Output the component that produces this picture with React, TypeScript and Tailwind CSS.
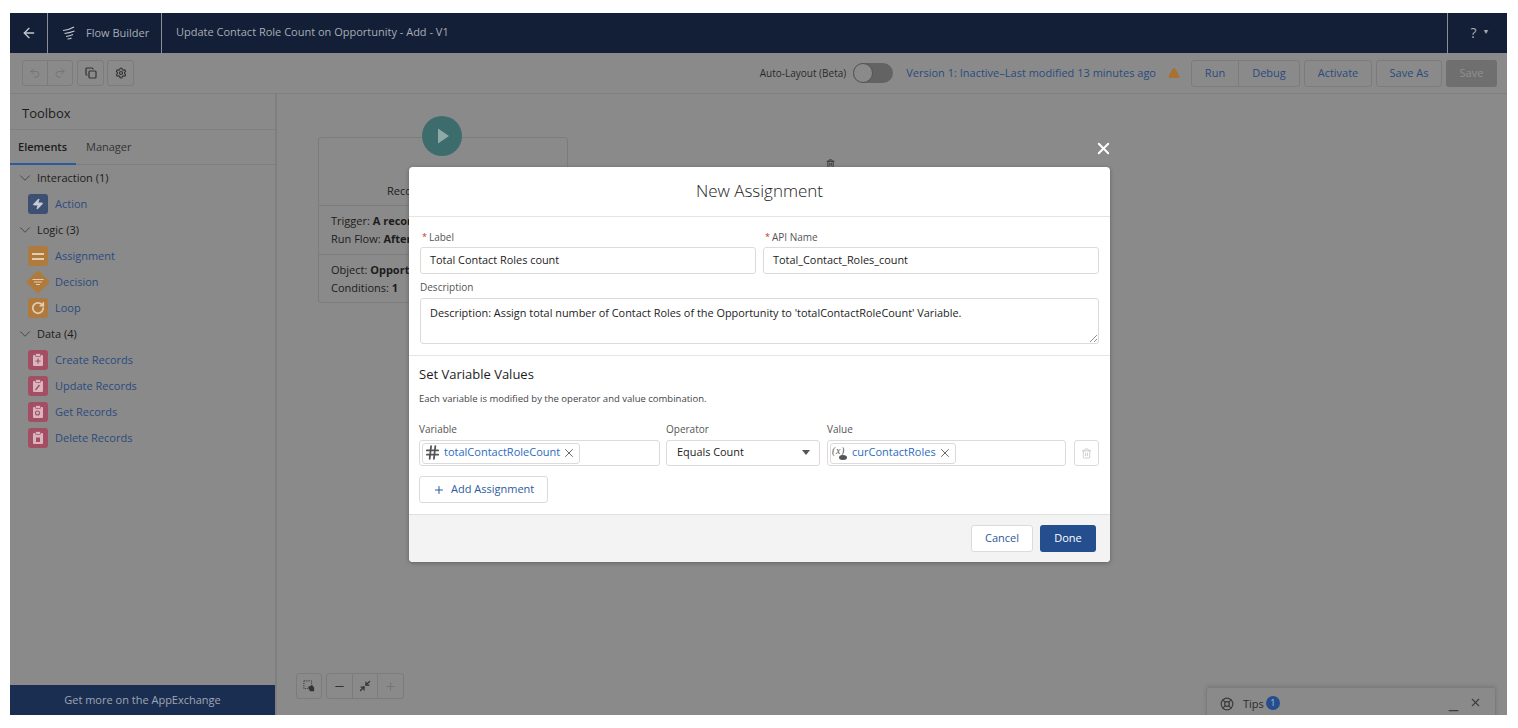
import { ArrowLeft, ChevronDown, Copy, Hash, LifeBuoy, Minimize2, Minus, Plus, Redo2, Settings, Trash2, TriangleAlert, Undo2, X, Zap, RotateCw } from "lucide-react";
import type { ReactNode } from "react";

const font = "font-['Open_Sans','Liberation_Sans',sans-serif]";

function Clipboard({ mark }: { mark: ReactNode }) {
  return (
    <svg viewBox="0 0 20 20" className="w-5 h-5 rounded-[3px] bg-[#a44e64]">
      <rect x="5" y="5" width="10" height="11" rx="1" fill="#d9b6bf" />
      <rect x="7.5" y="3.5" width="5" height="3" rx="0.5" fill="#d9b6bf" stroke="#a44e64" strokeWidth="0.7" />
      {mark}
    </svg>
  );
}

const logic = [
  {
    label: "Assignment",
    icon: (
      <div className="w-5 h-5 rounded-[3px] bg-[#b07a3c] flex flex-col items-center justify-center gap-[3px]">
        <span className="w-3 h-[2px] bg-[#e0cdb4]" />
        <span className="w-3 h-[2px] bg-[#e0cdb4]" />
      </div>
    ),
  },
  {
    label: "Decision",
    icon: (
      <svg viewBox="0 0 24 24" className="w-6 h-6 -mx-0.5">
        <rect x="3.5" y="3.5" width="17" height="17" rx="2" fill="#b07a3c" transform="rotate(45 12 12)" />
        <path d="M6.5 9.5h11M8 12h8M10 14.5h4" stroke="#e0cdb4" strokeWidth="1.2" />
      </svg>
    ),
  },
  {
    label: "Loop",
    icon: (
      <div className="w-5 h-5 rounded-[3px] bg-[#b07a3c] flex items-center justify-center">
        <RotateCw size={14} strokeWidth={3} className="text-[#e0cdb4]" />
      </div>
    ),
  },
];

const data = [
  { label: "Create Records", mark: <path d="M10 8.5v5M7.5 11h5" stroke="#a44e64" strokeWidth="1.2" /> },
  { label: "Update Records", mark: <path d="M7.5 14l4-5" stroke="#a44e64" strokeWidth="1.4" /> },
  { label: "Get Records", mark: <circle cx="9.5" cy="11" r="2" fill="none" stroke="#a44e64" strokeWidth="1.1" /> },
  { label: "Delete Records", mark: <rect x="8" y="9.5" width="4" height="4.5" fill="#a44e64" /> },
];

function Section({ title, children }: { title: string; children?: ReactNode }) {
  return (
    <>
      <div className="h-[26px] flex items-center pl-[6px] gap-[3px] text-[11px] text-[#1c1c1c]">
        <ChevronDown size={18} strokeWidth={1} className="text-[#333]" />
        {title}
      </div>
      {children}
    </>
  );
}

function Element({ icon, label }: { icon: ReactNode; label: string }) {
  return (
    <div className="h-[26px] flex items-center pl-[18px] gap-[7px] text-[11px] text-[#2b4a7e]">
      {icon}
      {label}
    </div>
  );
}

function IconBtn({ children, className = "" }: { children: ReactNode; className?: string }) {
  return (
    <div className={`h-[26px] flex items-center justify-center border border-[#7c7c7c] rounded-[3px] ${className}`}>
      {children}
    </div>
  );
}

function Field({ label, value, required }: { label: string; value: string; required?: boolean }) {
  return (
    <div className="flex-1">
      <div className="h-[16px] flex items-center text-[10px] text-[#555] pl-[2px]">
        {required && <span className="text-[#c23934] text-[9px] mr-[2px]">*</span>}
        <span>{label}</span>
      </div>
      <div className="mt-[2px] h-[27px] border border-[#dddbda] rounded-[3px] flex items-center pl-[9px] pb-px text-[10.9px] text-[#1c1c1c]">
        {value}
      </div>
    </div>
  );
}

function Pill({ icon, text }: { icon: ReactNode; text: string }) {
  return (
    <div className="h-[21px] ml-[2px] border border-[#dddbda] rounded-[3px] inline-flex items-center pl-[1px] pr-[3px] pb-px gap-[3px] text-[11px] text-[#2a6cc0]">
      {icon}
      <span>{text}</span>
      <X size={14} strokeWidth={1.5} className="text-[#555] -ml-px" />
    </div>
  );
}

export default function App() {
  return (
    <div className={`w-[1518px] h-[728px] bg-white pt-[13px] pl-[10px] pr-[11px] pb-[13px] overflow-hidden ${font}`}>
      <div className="relative w-full h-full flex flex-col bg-[#8a8a8a] overflow-hidden">
        {/* top bar */}
        <header className="h-[40px] shrink-0 bg-[#121f37] flex items-center text-[11px] text-[#a9adb5]">
          <div className="w-[38px] h-full flex items-center justify-center border-r border-[#8a8f98]">
            <ArrowLeft size={16} className="text-[#c4c7cc]" />
          </div>
          <div className="w-[114px] h-full flex items-center gap-[10px] pl-[14px] border-r border-[#8a8f98]">
            <svg viewBox="0 0 14 14" className="w-[14px] h-[14px]" stroke="#c4c7cc" strokeWidth="1.2" fill="none">
              <path d="M1 4.5Q7 4 12 1M2.5 7.5Q7 7 12.5 5M4 10.5Q8 10 11 8.5M5.5 13Q8 13 9.5 12" />
            </svg>
            Flow Builder
          </div>
          <div className="pl-[14px] pb-px flex-1">Update Contact Role Count on Opportunity - Add - V1</div>
          <div className="w-[60px] h-full flex items-center justify-center gap-[6px] pl-[5px] pb-px border-l border-[#8a8f98] text-[14px]">
            ?
            <span className="text-[7px]">▼</span>
          </div>
        </header>

        {/* toolbar */}
        <div className="h-[41px] shrink-0 border-b border-[#7f7f7f] flex items-center pl-[12px] pr-[10px] text-[#333]">
          <div className="flex w-[51px] border border-[#7c7c7c] rounded-[3px] h-[26px] text-[#757575]">
            <div className="flex-1 flex items-center justify-center border-r border-[#7c7c7c]">
              <Undo2 size={12} />
            </div>
            <div className="flex-1 flex items-center justify-center">
              <Redo2 size={12} />
            </div>
          </div>
          <IconBtn className="w-[27px] ml-[4px]">
            <Copy size={12} strokeWidth={2.4} />
          </IconBtn>
          <IconBtn className="w-[27px] ml-[3px]">
            <Settings size={12} strokeWidth={2.4} />
          </IconBtn>
          <div className="flex-1" />
          <span className="text-[10px] text-[#2a2a2a]">Auto-Layout (Beta)</span>
          <div className="ml-[7px] w-[40px] h-[20px] rounded-full bg-[#636363] relative">
            <span className="absolute left-0 top-0 w-[20px] h-[20px] rounded-full bg-[#8a8a8a] border border-[#555]" />
          </div>
          <span className="ml-[13px] text-[11px] text-[#2b4a7e]">Version 1: Inactive–Last modified 13 minutes ago</span>
          <TriangleAlert size={12} fill="#a8722f" className="ml-[12px] text-[#a8722f]" />
          <div className="ml-[11px] flex h-[27px] border border-[#7c7c7c] rounded-[3px] text-[11px] text-[#2b4a7e]">
            <div className="w-[47px] flex items-center justify-center border-r border-[#7c7c7c]">Run</div>
            <div className="w-[60px] flex items-center justify-center">Debug</div>
          </div>
          <div className="ml-[4px] w-[68px] h-[27px] border border-[#7c7c7c] rounded-[3px] flex items-center justify-center text-[11px] text-[#2b4a7e]">Activate</div>
          <div className="ml-[4px] w-[66px] h-[27px] border border-[#7c7c7c] rounded-[3px] flex items-center justify-center text-[11px] text-[#2b4a7e]">Save As</div>
          <div className="ml-[4px] w-[51px] h-[27px] bg-[#6f6f6f] rounded-[3px] flex items-center justify-center text-[11px] text-[#8f8f8f]">Save</div>
        </div>

        {/* body */}
        <div className="flex-1 flex min-h-0">
          <aside className="w-[267px] shrink-0 border-r-2 border-[#7f7f7f] flex flex-col">
            <div className="h-[36px] shrink-0 flex items-center pt-1 pl-[12px] text-[13px] text-[#1c1c1c] border-b border-[#7f7f7f]">Toolbox</div>
            <div className="h-[35px] shrink-0 flex border-b border-[#7f7f7f] text-[11px]">
              <div className="w-[66px] -mb-px flex items-center pt-px pl-[8px] font-semibold text-[#1c1c1c] border-b-2 border-[#2b5a9e]">Elements</div>
              <div className="flex items-center pl-[10px] text-[#333]">Manager</div>
            </div>
            <div className="flex-1">
              <Section title="Interaction (1)">
                <Element
                  label="Action"
                  icon={
                    <div className="w-5 h-5 rounded-[3px] bg-[#3e5072] flex items-center justify-center">
                      <Zap size={12} fill="#c8ccd4" className="text-[#c8ccd4]" />
                    </div>
                  }
                />
              </Section>
              <Section title="Logic (3)">
                {logic.map((item) => (
                  <Element key={item.label} icon={item.icon} label={item.label} />
                ))}
              </Section>
              <Section title="Data (4)">
                {data.map((item) => (
                  <Element key={item.label} icon={<Clipboard mark={item.mark} />} label={item.label} />
                ))}
              </Section>
            </div>
            <div className="h-[30px] shrink-0 bg-[#1a2e52] flex items-center justify-center pt-px text-[11px] text-[#a0a6b2]">
              Get more on the AppExchange
            </div>
          </aside>
          <main className="flex-1" />
        </div>

        {/* canvas start node, the modal hides its right part */}
        <div className="absolute left-[308px] top-[124px] w-[250px] h-[166px] border border-[#7c7c7c] rounded-[3px] text-[11px] text-[#1c1c1c] flex flex-col">
          <div className="h-[68px] border-b border-[#7c7c7c] flex items-end pb-[6px] pl-[68px]">Record</div>
          <div className="h-[49px] border-b border-[#7c7c7c] pl-[12px] pt-[6px] leading-[18px]">
            <div>Trigger: <b>A record</b></div>
            <div>Run Flow: <b>After</b></div>
          </div>
          <div className="pl-[12px] pt-[6px] leading-[18px]">
            <div>Object: <b>Opportunity</b></div>
            <div>Conditions: <b>1</b></div>
          </div>
        </div>
        <div className="absolute left-[412px] top-[103px] w-[40px] h-[40px] rounded-full bg-[#3d6c6d] flex items-center justify-center">
          <svg viewBox="0 0 20 20" className="w-5 h-5 ml-[2px]"><path d="M5 2.5L16 10 5 17.5z" fill="#8fa9a9" /></svg>
        </div>
        <Trash2 size={9} strokeWidth={2.5} className="absolute left-[816px] top-[146px] text-[#333]" />

        {/* canvas controls */}
        <div className="absolute left-[286px] top-[660px] flex gap-[4px] text-[#333]">
          <IconBtn className="w-[26px]">
            <svg viewBox="0 0 14 14" className="w-3 h-3"><rect x="1" y="1" width="9" height="9" fill="none" stroke="#333" strokeDasharray="1.5 1.2" /><path d="M6 8l5-2 2 3v4H8z" fill="#333" /></svg>
          </IconBtn>
          <div className="flex h-[26px] border border-[#7c7c7c] rounded-[3px]">
            <div className="w-[26px] flex items-center justify-center border-r border-[#7c7c7c]"><Minus size={13} /></div>
            <div className="w-[25px] flex items-center justify-center border-r border-[#7c7c7c]"><Minimize2 size={12} strokeWidth={2.5} /></div>
            <div className="w-[25px] flex items-center justify-center text-[#757575]"><Plus size={13} /></div>
          </div>
        </div>

        {/* tips */}
        <div className="absolute left-[1196px] top-[674px] w-[290px] h-[40px] border border-[#7c7c7c] rounded-t-[3px] shadow-[0_-1px_4px_rgba(0,0,0,0.12)] flex items-start pt-[8px] pl-[13px] text-[11px] text-[#2a2a2a]">
          <LifeBuoy size={14} className="text-[#3c3c3c] mt-px" />
          <span className="ml-[9px]">Tips</span>
          <span className="ml-[2px] w-[14px] h-[14px] rounded-full bg-[#254e8e] text-[#b5bfd0] text-[9px] flex items-center justify-center">1</span>
          <Minus size={15} className="ml-[166px] mt-[7px] text-[#3c3c3c]" />
          <X size={13} className="ml-[8px] text-[#3c3c3c]" />
        </div>

        {/* modal close */}
        <X size={19} strokeWidth={2.4} className="absolute left-[1084px] top-[126px] text-white" />

        {/* modal */}
        <div className="absolute left-[399px] top-[154px] w-[701px] h-[395px] bg-white rounded-[4px] shadow-[0_1px_4px_rgba(0,0,0,0.3)] flex flex-col overflow-hidden">
          <div className="h-[50px] shrink-0 border-b border-[#e5e5e5] flex items-center justify-center pb-px text-[17px] font-light text-[#222]">New Assignment</div>
          <div className="h-[139px] shrink-0 border-b border-[#e5e5e5] px-[11px] pt-[12px]">
            <div className="flex gap-[7px]">
              <Field label="Label" value="Total Contact Roles count" required />
              <Field label="API Name" value="Total_Contact_Roles_count" required />
            </div>
            <div className="mt-[5px] h-[16px] flex items-center text-[10px] text-[#555]">Description</div>
            <div className="relative mt-[3px] h-[46px] border border-[#dddbda] rounded-[3px] pl-[9px] pt-[6px] text-[10.9px] text-[#1c1c1c]">
              Description: Assign total number of Contact Roles of the Opportunity to 'totalContactRoleCount' Variable.
              <svg viewBox="0 0 8 8" className="absolute right-[1px] bottom-[1px] w-2 h-2" stroke="#777" strokeWidth="0.8">
                <path d="M1 8L8 1M5 8l3-3" />
              </svg>
            </div>
          </div>
          <div className="flex-1 px-[10px] pt-[9px]">
            <div className="text-[13px] leading-[18px] text-[#1c1c1c]">Set Variable Values</div>
            <div className="mt-[9px] text-[9.5px] leading-[14px] text-[#444]">Each variable is modified by the operator and value combination.</div>
            <div className="mt-[16px] flex gap-[6px] text-[10px] text-[#555]">
              <div className="w-[241px]">
                <div className="leading-[14px]">Variable</div>
                <div className="mt-[4px] h-[26px] border border-[#dddbda] rounded-[3px] flex items-center">
                  <Pill icon={<Hash size={17} strokeWidth={2.5} className="text-[#555]" />} text="totalContactRoleCount" />
                </div>
              </div>
              <div className="w-[154px]">
                <div className="leading-[14px]">Operator</div>
                <div className="mt-[4px] h-[26px] border border-[#dddbda] rounded-[3px] flex items-center justify-between pl-[10px] pr-[9px] pb-px text-[10.9px] text-[#1c1c1c]">
                  Equals Count
                  <span className="w-0 h-0 border-x-[4px] border-x-transparent border-t-[5px] border-t-[#555]" />
                </div>
              </div>
              <div className="w-[239px] ml-[1px]">
                <div className="leading-[14px]">Value</div>
                <div className="mt-[4px] h-[26px] border border-[#dddbda] rounded-[3px] flex items-center">
                  <Pill
                    icon={
                      <svg viewBox="0 0 17 16" className="w-[17px] h-[16px]">
                        <text x="0" y="9" fontSize="10" fontStyle="italic" letterSpacing="0.6" fontFamily="Liberation Serif, serif" fill="#555">(x)</text>
                        <ellipse cx="11" cy="12.5" rx="4" ry="2.5" fill="#555" />
                      </svg>
                    }
                    text="curContactRoles"
                  />
                </div>
              </div>
              <div className="ml-[2px] mt-[18px] w-[25px] h-[26px] border border-[#dddbda] rounded-[3px] flex items-center justify-center">
                <Trash2 size={11} className="text-[#c9c9c9]" />
              </div>
            </div>
            <div className="mt-[10px] w-[129px] h-[27px] border border-[#dddbda] rounded-[3px] flex items-center pl-[13px] gap-[6px] text-[11px] text-[#2b5a9e]">
              <Plus size={12} strokeWidth={2} />
              Add Assignment
            </div>
          </div>
          <div className="h-[48px] shrink-0 bg-[#f3f3f3] border-t border-[#e0e0e0] flex items-center justify-end gap-[7px] pr-[14px]">
            <div className="w-[62px] h-[27px] bg-white border border-[#dddbda] rounded-[3px] flex items-center justify-center text-[11px] text-[#2b5a9e]">Cancel</div>
            <div className="w-[56px] h-[27px] bg-[#254e8e] rounded-[3px] flex items-center justify-center text-[11px] text-white">Done</div>
          </div>
        </div>
      </div>
    </div>
  );
}
